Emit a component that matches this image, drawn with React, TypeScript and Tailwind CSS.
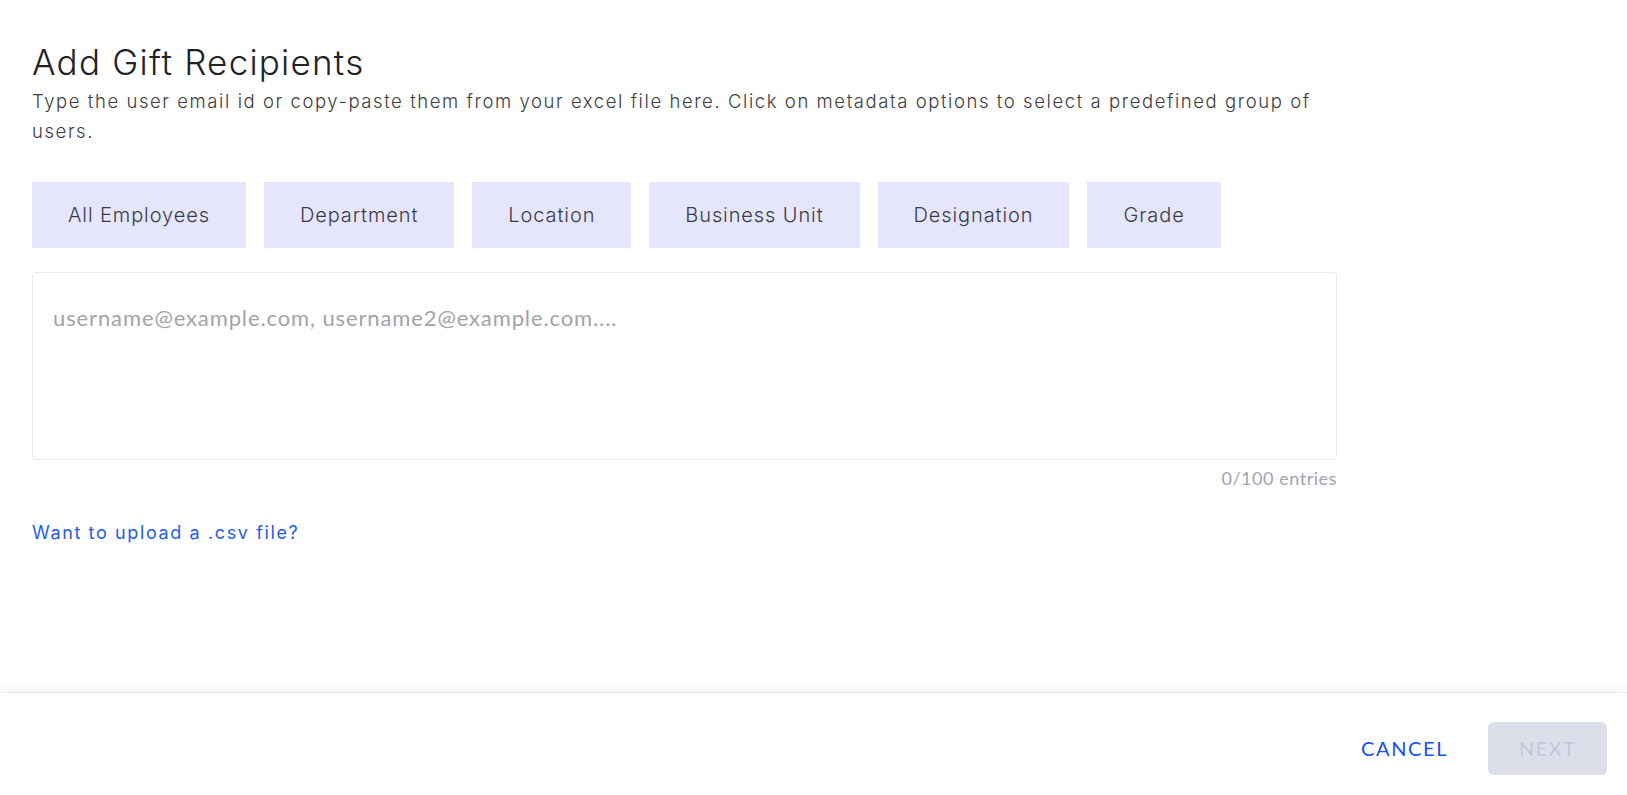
import React, { useState } from "react";

const GROUPS = ["All Employees", "Department", "Location", "Business Unit", "Designation", "Grade"];

export default function App() {
  const [emails, setEmails] = useState("");
  const count = emails.split(/[,\s]+/).filter(Boolean).length;

  return (
    <div className="h-screen flex flex-col bg-white font-['Inter',sans-serif]">
      {/* Body */}
      <div className="flex-1 pl-8 pt-[41px] w-[1337px]">
        <h1 className="text-[35px] leading-[42px] font-light text-[#222226] tracking-[0.035em]">Add Gift Recipients</h1>
        <p className="mt-[3px] w-[1300px] text-[18.5px] leading-[30px] font-light text-[#3d3d42] tracking-[0.085em]">
          Type the user email id or copy-paste them from your excel file here. Click on metadata options to select a predefined group of users.
        </p>

        <div className="flex gap-[18px] mt-[36px]">
          {GROUPS.map((g) => (
            <button
              key={g}
              className="h-[66px] px-[36px] bg-[#e5e6fc] text-[20px] font-light text-[#3b3b48] tracking-[0.045em]"
            >
              {g}
            </button>
          ))}
        </div>

        <div className="mt-6">
          <textarea
            value={emails}
            onChange={(e) => setEmails(e.target.value)}
            placeholder="username@example.com, username2@example.com...."
            className="block w-full h-[188px] resize-none rounded border border-[#ebebef] pl-[20px] pr-5 pt-[28px] text-[22px] leading-[33px] font-['Lato',sans-serif] tracking-[0.04em] text-[#333] placeholder:text-[#a3a3a8] outline-none"
          />
          <div className="mt-[6px] text-right text-[18px] leading-[24px] text-[#9ea2b6] font-['Lato',sans-serif] tracking-[0.03em]">
            {count}/100 entries
          </div>
        </div>

        <a className="block mt-[31px] text-[18px] leading-[24px] text-[#1f5cf0] tracking-[0.09em] cursor-pointer">
          Want to upload a .csv file?
        </a>
      </div>

      {/* Footer */}
      <div className="h-[103px] shrink-0 border-t border-[#ececee] shadow-[0_-6px_10px_rgba(0,0,0,0.04)] flex items-center justify-end pt-2 pr-5 gap-[20px]">
        <button className="px-5 py-3 text-[20px] text-[#1652f0] font-['Lato',sans-serif] tracking-[0.08em]">CANCEL</button>
        <button disabled className="w-[119px] h-[53px] rounded-md bg-[#dcdfea] text-[20px] text-[#c3c8d8] font-['Lato',sans-serif] tracking-[0.07em]">
          NEXT
        </button>
      </div>
    </div>
  );
}
